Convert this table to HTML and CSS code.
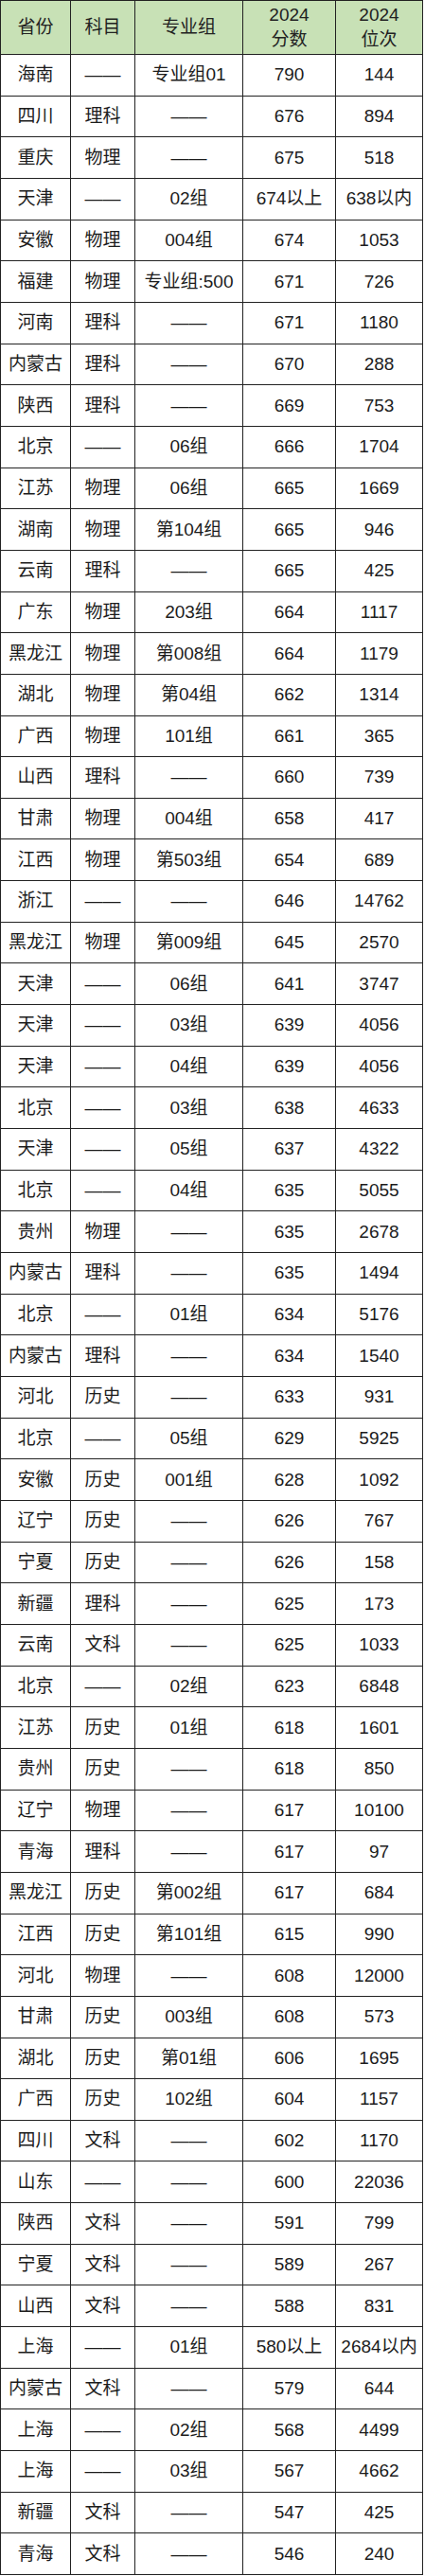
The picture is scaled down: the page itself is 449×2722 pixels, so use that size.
FILE: index.html
```html
<!DOCTYPE html>
<html lang="zh-CN">
<head>
<meta charset="utf-8">
<title>2024 分数位次</title>
<link rel="stylesheet" href="styles.css">
</head>
<body>
<div class="sheet">
  <div class="c h">省份</div><div class="c h">科目</div><div class="c h">专业组</div><div class="c h">2024<br>分数</div><div class="c h">2024<br>位次</div>
  <div class="c">海南</div><div class="c">——</div><div class="c">专业组01</div><div class="c">790</div><div class="c">144</div>
  <div class="c">四川</div><div class="c">理科</div><div class="c">——</div><div class="c">676</div><div class="c">894</div>
  <div class="c">重庆</div><div class="c">物理</div><div class="c">——</div><div class="c">675</div><div class="c">518</div>
  <div class="c">天津</div><div class="c">——</div><div class="c">02组</div><div class="c">674以上</div><div class="c">638以内</div>
  <div class="c">安徽</div><div class="c">物理</div><div class="c">004组</div><div class="c">674</div><div class="c">1053</div>
  <div class="c">福建</div><div class="c">物理</div><div class="c">专业组:500</div><div class="c">671</div><div class="c">726</div>
  <div class="c">河南</div><div class="c">理科</div><div class="c">——</div><div class="c">671</div><div class="c">1180</div>
  <div class="c">内蒙古</div><div class="c">理科</div><div class="c">——</div><div class="c">670</div><div class="c">288</div>
  <div class="c">陕西</div><div class="c">理科</div><div class="c">——</div><div class="c">669</div><div class="c">753</div>
  <div class="c">北京</div><div class="c">——</div><div class="c">06组</div><div class="c">666</div><div class="c">1704</div>
  <div class="c">江苏</div><div class="c">物理</div><div class="c">06组</div><div class="c">665</div><div class="c">1669</div>
  <div class="c">湖南</div><div class="c">物理</div><div class="c">第104组</div><div class="c">665</div><div class="c">946</div>
  <div class="c">云南</div><div class="c">理科</div><div class="c">——</div><div class="c">665</div><div class="c">425</div>
  <div class="c">广东</div><div class="c">物理</div><div class="c">203组</div><div class="c">664</div><div class="c">1117</div>
  <div class="c">黑龙江</div><div class="c">物理</div><div class="c">第008组</div><div class="c">664</div><div class="c">1179</div>
  <div class="c">湖北</div><div class="c">物理</div><div class="c">第04组</div><div class="c">662</div><div class="c">1314</div>
  <div class="c">广西</div><div class="c">物理</div><div class="c">101组</div><div class="c">661</div><div class="c">365</div>
  <div class="c">山西</div><div class="c">理科</div><div class="c">——</div><div class="c">660</div><div class="c">739</div>
  <div class="c">甘肃</div><div class="c">物理</div><div class="c">004组</div><div class="c">658</div><div class="c">417</div>
  <div class="c">江西</div><div class="c">物理</div><div class="c">第503组</div><div class="c">654</div><div class="c">689</div>
  <div class="c">浙江</div><div class="c">——</div><div class="c">——</div><div class="c">646</div><div class="c">14762</div>
  <div class="c">黑龙江</div><div class="c">物理</div><div class="c">第009组</div><div class="c">645</div><div class="c">2570</div>
  <div class="c">天津</div><div class="c">——</div><div class="c">06组</div><div class="c">641</div><div class="c">3747</div>
  <div class="c">天津</div><div class="c">——</div><div class="c">03组</div><div class="c">639</div><div class="c">4056</div>
  <div class="c">天津</div><div class="c">——</div><div class="c">04组</div><div class="c">639</div><div class="c">4056</div>
  <div class="c">北京</div><div class="c">——</div><div class="c">03组</div><div class="c">638</div><div class="c">4633</div>
  <div class="c">天津</div><div class="c">——</div><div class="c">05组</div><div class="c">637</div><div class="c">4322</div>
  <div class="c">北京</div><div class="c">——</div><div class="c">04组</div><div class="c">635</div><div class="c">5055</div>
  <div class="c">贵州</div><div class="c">物理</div><div class="c">——</div><div class="c">635</div><div class="c">2678</div>
  <div class="c">内蒙古</div><div class="c">理科</div><div class="c">——</div><div class="c">635</div><div class="c">1494</div>
  <div class="c">北京</div><div class="c">——</div><div class="c">01组</div><div class="c">634</div><div class="c">5176</div>
  <div class="c">内蒙古</div><div class="c">理科</div><div class="c">——</div><div class="c">634</div><div class="c">1540</div>
  <div class="c">河北</div><div class="c">历史</div><div class="c">——</div><div class="c">633</div><div class="c">931</div>
  <div class="c">北京</div><div class="c">——</div><div class="c">05组</div><div class="c">629</div><div class="c">5925</div>
  <div class="c">安徽</div><div class="c">历史</div><div class="c">001组</div><div class="c">628</div><div class="c">1092</div>
  <div class="c">辽宁</div><div class="c">历史</div><div class="c">——</div><div class="c">626</div><div class="c">767</div>
  <div class="c">宁夏</div><div class="c">历史</div><div class="c">——</div><div class="c">626</div><div class="c">158</div>
  <div class="c">新疆</div><div class="c">理科</div><div class="c">——</div><div class="c">625</div><div class="c">173</div>
  <div class="c">云南</div><div class="c">文科</div><div class="c">——</div><div class="c">625</div><div class="c">1033</div>
  <div class="c">北京</div><div class="c">——</div><div class="c">02组</div><div class="c">623</div><div class="c">6848</div>
  <div class="c">江苏</div><div class="c">历史</div><div class="c">01组</div><div class="c">618</div><div class="c">1601</div>
  <div class="c">贵州</div><div class="c">历史</div><div class="c">——</div><div class="c">618</div><div class="c">850</div>
  <div class="c">辽宁</div><div class="c">物理</div><div class="c">——</div><div class="c">617</div><div class="c">10100</div>
  <div class="c">青海</div><div class="c">理科</div><div class="c">——</div><div class="c">617</div><div class="c">97</div>
  <div class="c">黑龙江</div><div class="c">历史</div><div class="c">第002组</div><div class="c">617</div><div class="c">684</div>
  <div class="c">江西</div><div class="c">历史</div><div class="c">第101组</div><div class="c">615</div><div class="c">990</div>
  <div class="c">河北</div><div class="c">物理</div><div class="c">——</div><div class="c">608</div><div class="c">12000</div>
  <div class="c">甘肃</div><div class="c">历史</div><div class="c">003组</div><div class="c">608</div><div class="c">573</div>
  <div class="c">湖北</div><div class="c">历史</div><div class="c">第01组</div><div class="c">606</div><div class="c">1695</div>
  <div class="c">广西</div><div class="c">历史</div><div class="c">102组</div><div class="c">604</div><div class="c">1157</div>
  <div class="c">四川</div><div class="c">文科</div><div class="c">——</div><div class="c">602</div><div class="c">1170</div>
  <div class="c">山东</div><div class="c">——</div><div class="c">——</div><div class="c">600</div><div class="c">22036</div>
  <div class="c">陕西</div><div class="c">文科</div><div class="c">——</div><div class="c">591</div><div class="c">799</div>
  <div class="c">宁夏</div><div class="c">文科</div><div class="c">——</div><div class="c">589</div><div class="c">267</div>
  <div class="c">山西</div><div class="c">文科</div><div class="c">——</div><div class="c">588</div><div class="c">831</div>
  <div class="c">上海</div><div class="c">——</div><div class="c">01组</div><div class="c">580以上</div><div class="c">2684以内</div>
  <div class="c">内蒙古</div><div class="c">文科</div><div class="c">——</div><div class="c">579</div><div class="c">644</div>
  <div class="c">上海</div><div class="c">——</div><div class="c">02组</div><div class="c">568</div><div class="c">4499</div>
  <div class="c">上海</div><div class="c">——</div><div class="c">03组</div><div class="c">567</div><div class="c">4662</div>
  <div class="c">新疆</div><div class="c">文科</div><div class="c">——</div><div class="c">547</div><div class="c">425</div>
  <div class="c">青海</div><div class="c">文科</div><div class="c">——</div><div class="c">546</div><div class="c">240</div>
</div>
</body>
</html>
```

FILE: styles.css
```css
html, body {
  margin: 0;
  padding: 0;
  background: #ffffff;
}

.sheet {
  display: grid;
  width: 447px;
  grid-template-columns: 74px 68px 114px 98px 92px;
  grid-template-rows: 57px repeat(61, 43.67px);
  border-left: 1px solid #222;
  border-top: 1px solid #222;
  box-sizing: border-box;
  font-family: "Liberation Sans", "Noto Sans CJK SC", sans-serif;
  font-size: 19px;
  color: #1c1c1c;
}

.c {
  box-sizing: border-box;
  border-right: 1px solid #222;
  border-bottom: 1px solid #222;
  display: flex;
  align-items: center;
  justify-content: center;
  text-align: center;
  white-space: nowrap;
  line-height: 26px;
}

.h {
  background: #c8e1b6;
  color: #222;
}
```
